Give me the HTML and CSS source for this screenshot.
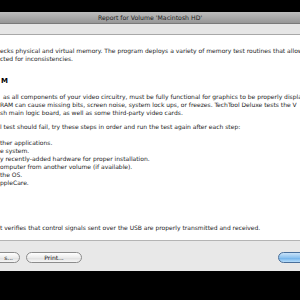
FILE: index.html
```html
<!DOCTYPE html>
<html lang="en">
<head>
  <meta charset="UTF-8" />
  <title>Report for Volume 'Macintosh HD'</title>
  <link rel="stylesheet" href="styles.css">
</head>
<body>
  <div class="window">
    <div class="titlebar">Report for Volume 'Macintosh HD'</div>
    <div class="toolbar"></div>

    <div class="content">
      <p class="para first">
        <span class="line">ecks physical and virtual memory. The program deploys a variety of memory test routines that allow</span>
        <span class="line">cted for inconsistencies.</span>
      </p>

      <h4 class="heading">M</h4>

      <p class="para">
        <span class="line indent">as all components of your video circuitry, must be fully functional for graphics to be properly displa</span>
        <span class="line">RAM can cause missing bits, screen noise, system lock ups, or freezes. TechTool Deluxe tests the V</span>
        <span class="line">sh main logic board, as well as some third-party video cards.</span>
      </p>

      <p class="para steps">
        <span class="line">l test should fail, try these steps in order and run the test again after each step:</span>
      </p>

      <ul class="list">
        <li>ther applications.</li>
        <li>e system.</li>
        <li>y recently-added hardware for proper installation.</li>
        <li>omputer from another volume (if available).</li>
        <li>the OS.</li>
        <li>ppleCare.</li>
      </ul>

      <p class="para usb">
        <span class="line">t verifies that control signals sent over the USB are properly transmitted and received.</span>
      </p>
    </div>

    <div class="footer">
      <button class="btn save">s...</button>
      <button class="btn">Print...</button>
      <span class="spacer"></span>
      <button class="btn default"></button>
    </div>
  </div>
</body>
</html>
```

FILE: styles.css
```css
/* RESET */
* { margin:0; padding:0; box-sizing:border-box }
html, body { width:100%; height:100% }
body {
  background:#000;
  font-family:"DejaVu Sans","Liberation Sans",sans-serif;
  overflow:hidden;
  padding-top:12px;
}

.window { width:300px; height:259px; background:#fff; overflow:hidden; display:flex; flex-direction:column }

.titlebar {
  height:12px; line-height:12px; text-align:center;
  font-size:6.2px; color:#222;
  background:linear-gradient(#bdbdbd,#979797);
  border-bottom:1px solid #7a7a7a;
}
.toolbar { height:11px; background:#e6e6e6; border-bottom:1px solid #a8a8a8 }

.content {
  flex:1; color:#1c1c1c;
  font-size:6px; line-height:8px;
  padding-top:12px; white-space:nowrap;
}
.line { display:block }
.line.indent { padding-left:3px }
.para.steps { margin-top:6px }
.heading { font-size:7px; line-height:9px; font-weight:bold; color:#000; margin:14px 0 7px 1px }
.list { list-style:none; margin-top:8px }
.para.usb { margin-top:37px }

.footer {
  height:31px; background:#e8e8e8; border-top:1px solid #b4b4b4;
  display:flex; align-items:center; gap:6px; padding-top:2px;
}
.btn {
  height:11px; font-family:inherit; font-size:6px; color:#111;
  background:linear-gradient(#ffffff,#ececec 50%,#dedede 51%,#f6f6f6);
  border:1px solid #8c8c8c; border-radius:6px;
  width:56px;
}
.btn.save { width:32px; margin-left:-12px; text-align:right; padding-right:6px }
.spacer { flex:1 }
.btn.default {
  width:40px; flex-shrink:0; margin-right:-18px;
  background:linear-gradient(#c9e3f9,#8fc3ef 50%,#6aaee9 51%,#b6dcfa);
  border-color:#4a6f9a;
}
```
